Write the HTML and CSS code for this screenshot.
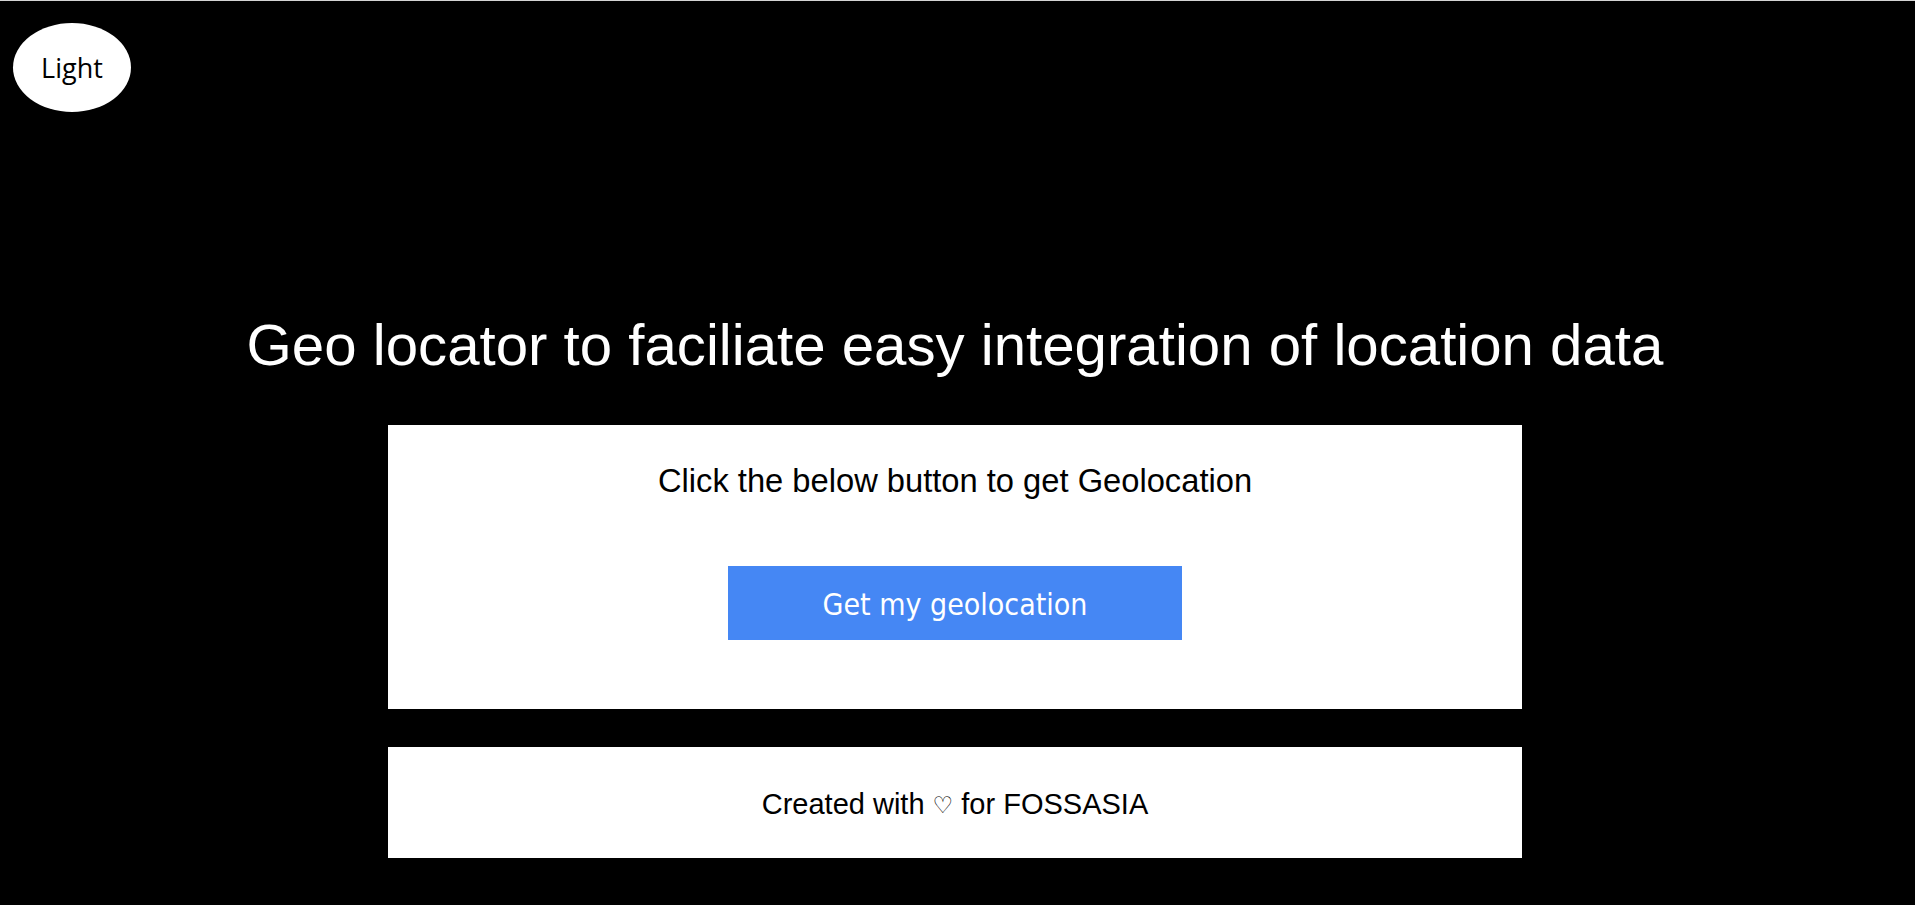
FILE: index.html
```html
<!DOCTYPE html>
<html lang="en">
<head>
<meta charset="utf-8">
<title>Geo locator</title>
<link rel="stylesheet" href="styles.css">
</head>
<body>
<header class="topbar">
  <button class="theme-toggle" type="button">Light</button>
</header>
<main class="main">
  <h1 class="title">Geo locator to faciliate easy integration of location data</h1>
  <section class="card card-main">
    <p class="card-text">Click the below button to get Geolocation</p>
    <button class="geo-btn" type="button">Get my geolocation</button>
  </section>
  <footer class="card card-footer">
    <p class="footer-text">Created with <span class="heart">&#9825;</span> for FOSSASIA</p>
  </footer>
</main>
</body>
</html>
```

FILE: styles.css
```css
html, body {
  margin: 0;
  padding: 0;
}

body {
  background: #000;
  border-top: 1px solid #d4d4d4;
  font-family: "Liberation Sans", Arial, sans-serif;
  color: #fff;
  min-height: 904px;
}

.topbar {
  display: flex;
  padding: 22px 13px 0;
}

.theme-toggle {
  width: 118px;
  height: 89px;
  border: none;
  border-radius: 50%;
  background: #fff;
  color: #000;
  font-family: "Open Sans", "Noto Sans", sans-serif;
  font-size: 27px;
  padding: 0;
  display: flex;
  align-items: center;
  justify-content: center;
}

.main {
  display: flex;
  flex-direction: column;
  align-items: center;
  padding-right: 5px;
}

.title {
  margin: 200px 0 0;
  font-size: 58.2px;
  font-weight: normal;
  line-height: 1.15;
  color: #fff;
  text-align: center;
}

.card {
  width: 1134px;
  background: #fff;
  color: #000;
  box-sizing: border-box;
  display: flex;
  flex-direction: column;
  align-items: center;
}

.card-main {
  margin-top: 46px;
  height: 284px;
  padding-top: 37px;
}

.card-text {
  margin: 0;
  font-size: 32.7px;
  line-height: 1.15;
}

.geo-btn {
  margin-top: 66px;
  width: 454px;
  height: 74px;
  border: none;
  background: #4587f4;
  color: #fff;
  font-family: "DejaVu Sans Condensed", "DejaVu Sans", sans-serif;
  font-size: 30px;
  padding: 4px 0 0;
}

.card-footer {
  margin-top: 38px;
  height: 111px;
  justify-content: center;
  padding-top: 5px;
}

.footer-text {
  margin: 0;
  font-size: 29px;
  line-height: 1.15;
}

.heart {
  font-family: "DejaVu Sans", sans-serif;
  font-size: 23px;
  vertical-align: 1px;
}
```
